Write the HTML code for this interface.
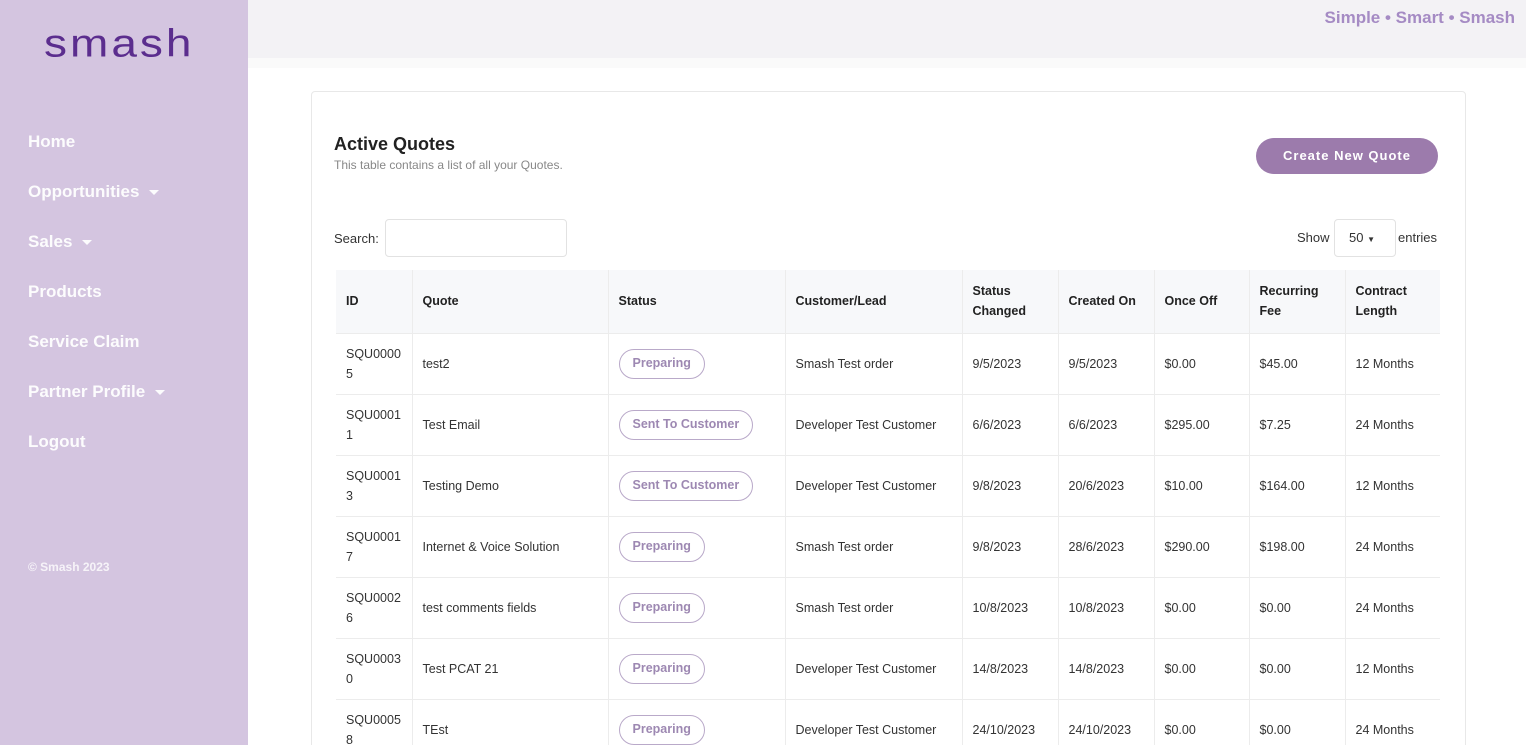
<!DOCTYPE html>
<html style="overflow:hidden;height:745px"><head><meta charset="utf-8"><style>
*{box-sizing:border-box;margin:0;padding:0}
body{width:1526px;height:745px;overflow:hidden;background:#fff;font-family:"Liberation Sans",sans-serif;position:relative;color:#333}
.side{position:absolute;left:0;top:0;width:248px;height:745px;background:#d4c5e0}
.logo{position:absolute;left:44px;top:20px;font-size:46px;color:#5b2d8e;letter-spacing:3px;font-weight:400;transform:scaleY(0.85);transform-origin:top left}
.nav{position:absolute;left:28px;color:#fff;font-size:17px;font-weight:bold;opacity:.95}
.nav .car{display:inline-block;width:0;height:0;border-left:5px solid transparent;border-right:5px solid transparent;border-top:5px solid #fff;margin-left:10px;vertical-align:middle}
.top{position:absolute;left:248px;top:0;right:0;height:68px;background:#f3f2f5;border-bottom:10px solid #fafafa}
.tag{position:absolute;right:11px;top:8px;font-size:17px;color:#a58bc4;font-weight:bold}
.card{position:absolute;left:311px;top:91px;width:1155px;height:660px;border:1px solid #e8e8e8;border-radius:4px}
h1{position:absolute;left:334px;top:134px;font-size:18px;color:#222}
.sub{position:absolute;left:334px;top:158px;font-size:12px;color:#888}
.btn{position:absolute;left:1256px;top:138px;width:182px;height:36px;border-radius:18px;background:#9c7bac;color:#fff;font-weight:bold;font-size:13px;text-align:center;line-height:36px;letter-spacing:1px}
.lbl{position:absolute;font-size:13px;color:#333}
.inp{position:absolute;border:1px solid #e2e2e2;border-radius:4px}
table{position:absolute;left:336px;top:270px;width:1104px;border-collapse:collapse;table-layout:fixed;font-size:12.5px}
th{background:#f7f8fa;height:63px;text-align:left;font-weight:bold;padding:0 10px;line-height:20px;border-right:1px solid #ececec;color:#222}
td{height:61px;padding:0 10px;border-top:1px solid #ececec;border-right:1px solid #ececec;line-height:20px;color:#333}
th:last-child,td:last-child{border-right:none}
.pill{display:inline-block;border:1.5px solid #b9a9c9;border-radius:16px;padding:0 13px;height:30px;line-height:27px;color:#9d88b2;font-weight:bold}
</style></head><body>
<div class="side">
<div class="logo">smash</div>
<div class="nav" style="top:132px">Home</div>
<div class="nav" style="top:182px">Opportunities<span class="car"></span></div>
<div class="nav" style="top:232px">Sales<span class="car"></span></div>
<div class="nav" style="top:282px">Products</div>
<div class="nav" style="top:332px">Service Claim</div>
<div class="nav" style="top:382px">Partner Profile<span class="car"></span></div>
<div class="nav" style="top:432px">Logout</div>
<div class="nav" style="top:560px;font-size:12px;opacity:.8">© Smash 2023</div>
</div>
<div class="top"><div class="tag">Simple • Smart • Smash</div></div>
<div class="card"></div>
<h1>Active Quotes</h1>
<div class="sub">This table contains a list of all your Quotes.</div>
<div class="btn">Create New Quote</div>
<div class="lbl" style="left:334px;top:231px">Search:</div>
<div class="inp" style="left:385px;top:219px;width:182px;height:38px"></div>
<div class="lbl" style="left:1297px;top:230px">Show</div>
<div class="inp" style="left:1334px;top:219px;width:62px;height:38px"></div>
<div class="lbl" style="left:1349px;top:230px">50 <span style="font-size:8px">▼</span></div>
<div class="lbl" style="left:1398px;top:230px">entries</div>
<table>
<colgroup><col style="width:76px"><col style="width:196px"><col style="width:177px"><col style="width:177px"><col style="width:96px"><col style="width:96px"><col style="width:95px"><col style="width:96px"><col style="width:95px"></colgroup>
<tr><th>ID</th><th>Quote</th><th>Status</th><th>Customer/Lead</th><th>Status Changed</th><th>Created On</th><th>Once Off</th><th>Recurring Fee</th><th>Contract Length</th></tr>
<tr><td>SQU0000 5</td><td>test2</td><td><span class="pill">Preparing</span></td><td>Smash Test order</td><td>9/5/2023</td><td>9/5/2023</td><td>$0.00</td><td>$45.00</td><td>12 Months</td></tr>
<tr><td>SQU0001 1</td><td>Test Email</td><td><span class="pill">Sent To Customer</span></td><td>Developer Test Customer</td><td>6/6/2023</td><td>6/6/2023</td><td>$295.00</td><td>$7.25</td><td>24 Months</td></tr>
<tr><td>SQU0001 3</td><td>Testing Demo</td><td><span class="pill">Sent To Customer</span></td><td>Developer Test Customer</td><td>9/8/2023</td><td>20/6/2023</td><td>$10.00</td><td>$164.00</td><td>12 Months</td></tr>
<tr><td>SQU0001 7</td><td>Internet &amp; Voice Solution</td><td><span class="pill">Preparing</span></td><td>Smash Test order</td><td>9/8/2023</td><td>28/6/2023</td><td>$290.00</td><td>$198.00</td><td>24 Months</td></tr>
<tr><td>SQU0002 6</td><td>test comments fields</td><td><span class="pill">Preparing</span></td><td>Smash Test order</td><td>10/8/2023</td><td>10/8/2023</td><td>$0.00</td><td>$0.00</td><td>24 Months</td></tr>
<tr><td>SQU0003 0</td><td>Test PCAT 21</td><td><span class="pill">Preparing</span></td><td>Developer Test Customer</td><td>14/8/2023</td><td>14/8/2023</td><td>$0.00</td><td>$0.00</td><td>12 Months</td></tr>
<tr><td>SQU0005 8</td><td>TEst</td><td><span class="pill">Preparing</span></td><td>Developer Test Customer</td><td>24/10/2023</td><td>24/10/2023</td><td>$0.00</td><td>$0.00</td><td>24 Months</td></tr>
</table>
</body></html>
